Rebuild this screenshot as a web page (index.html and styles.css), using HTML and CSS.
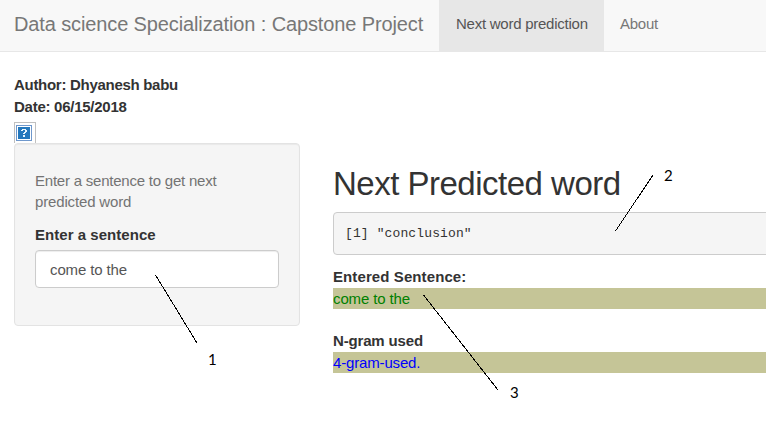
FILE: index.html
```
<!DOCTYPE html>
<html lang="en">
<head>
<meta charset="utf-8">
<title>Next word prediction</title>
<link rel="stylesheet" href="styles.css">
</head>
<body>
<nav class="navbar">
  <span class="brand">Data science Specialization : Capstone Project</span>
  <a class="tab active"><span class="tab-text">Next word prediction</span></a>
  <a class="tab"><span class="tab-text">About</span></a>
</nav>
<main class="page">
  <header class="meta">
    <div><span class="author">Author: Dhyanesh babu</span></div>
    <div><span class="date">Date: 06/15/2018</span></div>
  </header>
  <div class="missing">
    <svg width="16" height="16" viewBox="0 0 16 16" shape-rendering="crispEdges">
      <rect x=".5" y=".5" width="15" height="15" fill="#fff" stroke="#6f98cc"/>
      <rect x="2" y="2" width="12" height="12" fill="#2478bd"/>
      <path d="M6 4h4v1h1v2h-1v1h-1v1h-2v-1h1v-1h1v-2h-2v1h-2v-1h1zM7 10h2v2h-2z" fill="#e8f6ff"/>
    </svg>
  </div>
  <div class="columns">
    <form class="well">
      <p class="help"><span class="help-a">Enter a sentence to get next</span><br><span class="help-b">predicted word</span></p>
      <label class="label">Enter a sentence</label>
      <div class="input"><span class="input-text">come to the</span></div>
    </form>
    <section class="result">
      <h2 class="title">Next Predicted word</h2>
      <pre class="output">[1] "conclusion"</pre>
      <div class="line"><b class="entered">Entered Sentence:</b></div>
      <div class="value green"><span class="input-text">come to the</span></div>
      <div class="line second"><b class="ngram">N-gram used</b></div>
      <div class="value blue"><span class="gram">4-gram-used.</span></div>
    </section>
  </div>
</main>
<svg class="callouts" width="766" height="439" viewBox="0 0 766 439">
  <g stroke="#000" stroke-width="1" shape-rendering="crispEdges">
    <path d="M155.5 275L197 343M653 175L615.5 231M423.5 295L498 390"/>
  </g>
  <g class="numbers">
    <text x="208" y="365">1</text>
    <text x="664" y="181">2</text>
    <text x="510" y="398">3</text>
  </g>
</svg>
</body>
</html>
```
FILE: styles.css
```
* { box-sizing: border-box; }
body {
  margin: 0;
  height: 439px;
  overflow: hidden;
  position: relative;
  background: #fff;
  color: #333;
  font: 15px/21.4px "Liberation Sans", Arial, sans-serif;
}
.navbar {
  display: flex;
  height: 52px;
  background: #f8f8f8;
  border-bottom: 1px solid #e7e7e7;
  color: #777;
  white-space: nowrap;
}
.brand {
  width: 439px;
  padding: 14px 0 0 14px;
  font-size: 20px;
  letter-spacing: -.12px;
}
.tab { height: 52px; padding: 13px 16px 0; letter-spacing: -.25px; }
.tab.active { width: 165px; padding-left: 17px; background: #e7e7e7; color: #555; }
.page { padding: 22px 0 0 14px; }
.meta { height: 48px; font-weight: bold; line-height: 22px; }
.author { letter-spacing: -.29px; }
.date { letter-spacing: -.26px; }
.missing {
  width: 22px;
  height: 21px;
  border: 1px solid #c0c0c0;
  border-bottom: 0;
  padding: 2px 0 0 1px;
}
.missing svg { display: block; }
.columns { display: flex; align-items: flex-start; }
.well {
  width: 286px;
  height: 183px;
  padding: 26px 20px 0;
  border: 1px solid #e3e3e3;
  border-radius: 4px;
  background: #f5f5f5;
  box-shadow: inset 0 1px 1px rgba(0, 0, 0, .05);
}
.help { margin: 0 0 12px; line-height: 21px; color: #737373; white-space: nowrap; }
.help-a { letter-spacing: -.22px; }
.help-b { letter-spacing: -.15px; }
.label { display: block; margin-bottom: 5px; font-weight: bold; line-height: 21px; letter-spacing: .04px; }
.input {
  width: 244px;
  height: 38px;
  padding: 8px 14px;
  border: 1px solid #ccc;
  border-radius: 4px;
  background: #fff;
  color: #555;
  box-shadow: inset 0 1px 1px rgba(0, 0, 0, .075);
}
.input-text { letter-spacing: -.12px; }
.result { flex: 1; min-width: 0; margin-left: 33px; }
.title {
  margin: 22px 0 10px;
  font-size: 33px;
  font-weight: normal;
  line-height: 37px;
  letter-spacing: -.5px;
  white-space: nowrap;
}
.output {
  width: 450px;
  height: 43px;
  margin: 0 0 11px;
  padding: 10px 11px;
  border: 1px solid #ccc;
  border-radius: 4px;
  background: #f5f5f5;
  font: 13px/21px "Liberation Mono", "Courier New", monospace;
  letter-spacing: .12px;
}
.line { height: 22px; line-height: 22px; }
.entered { letter-spacing: .1px; }
.ngram, .gram { letter-spacing: -.16px; }
.second { margin-top: 21px; }
.value { height: 21px; line-height: 21px; background: #c5c597; }
.green { color: #008000; }
.blue { color: #00f; }
.callouts { position: absolute; left: 0; top: 0; pointer-events: none; }
.numbers { font: 15px Lato, sans-serif; fill: #000; }
```
